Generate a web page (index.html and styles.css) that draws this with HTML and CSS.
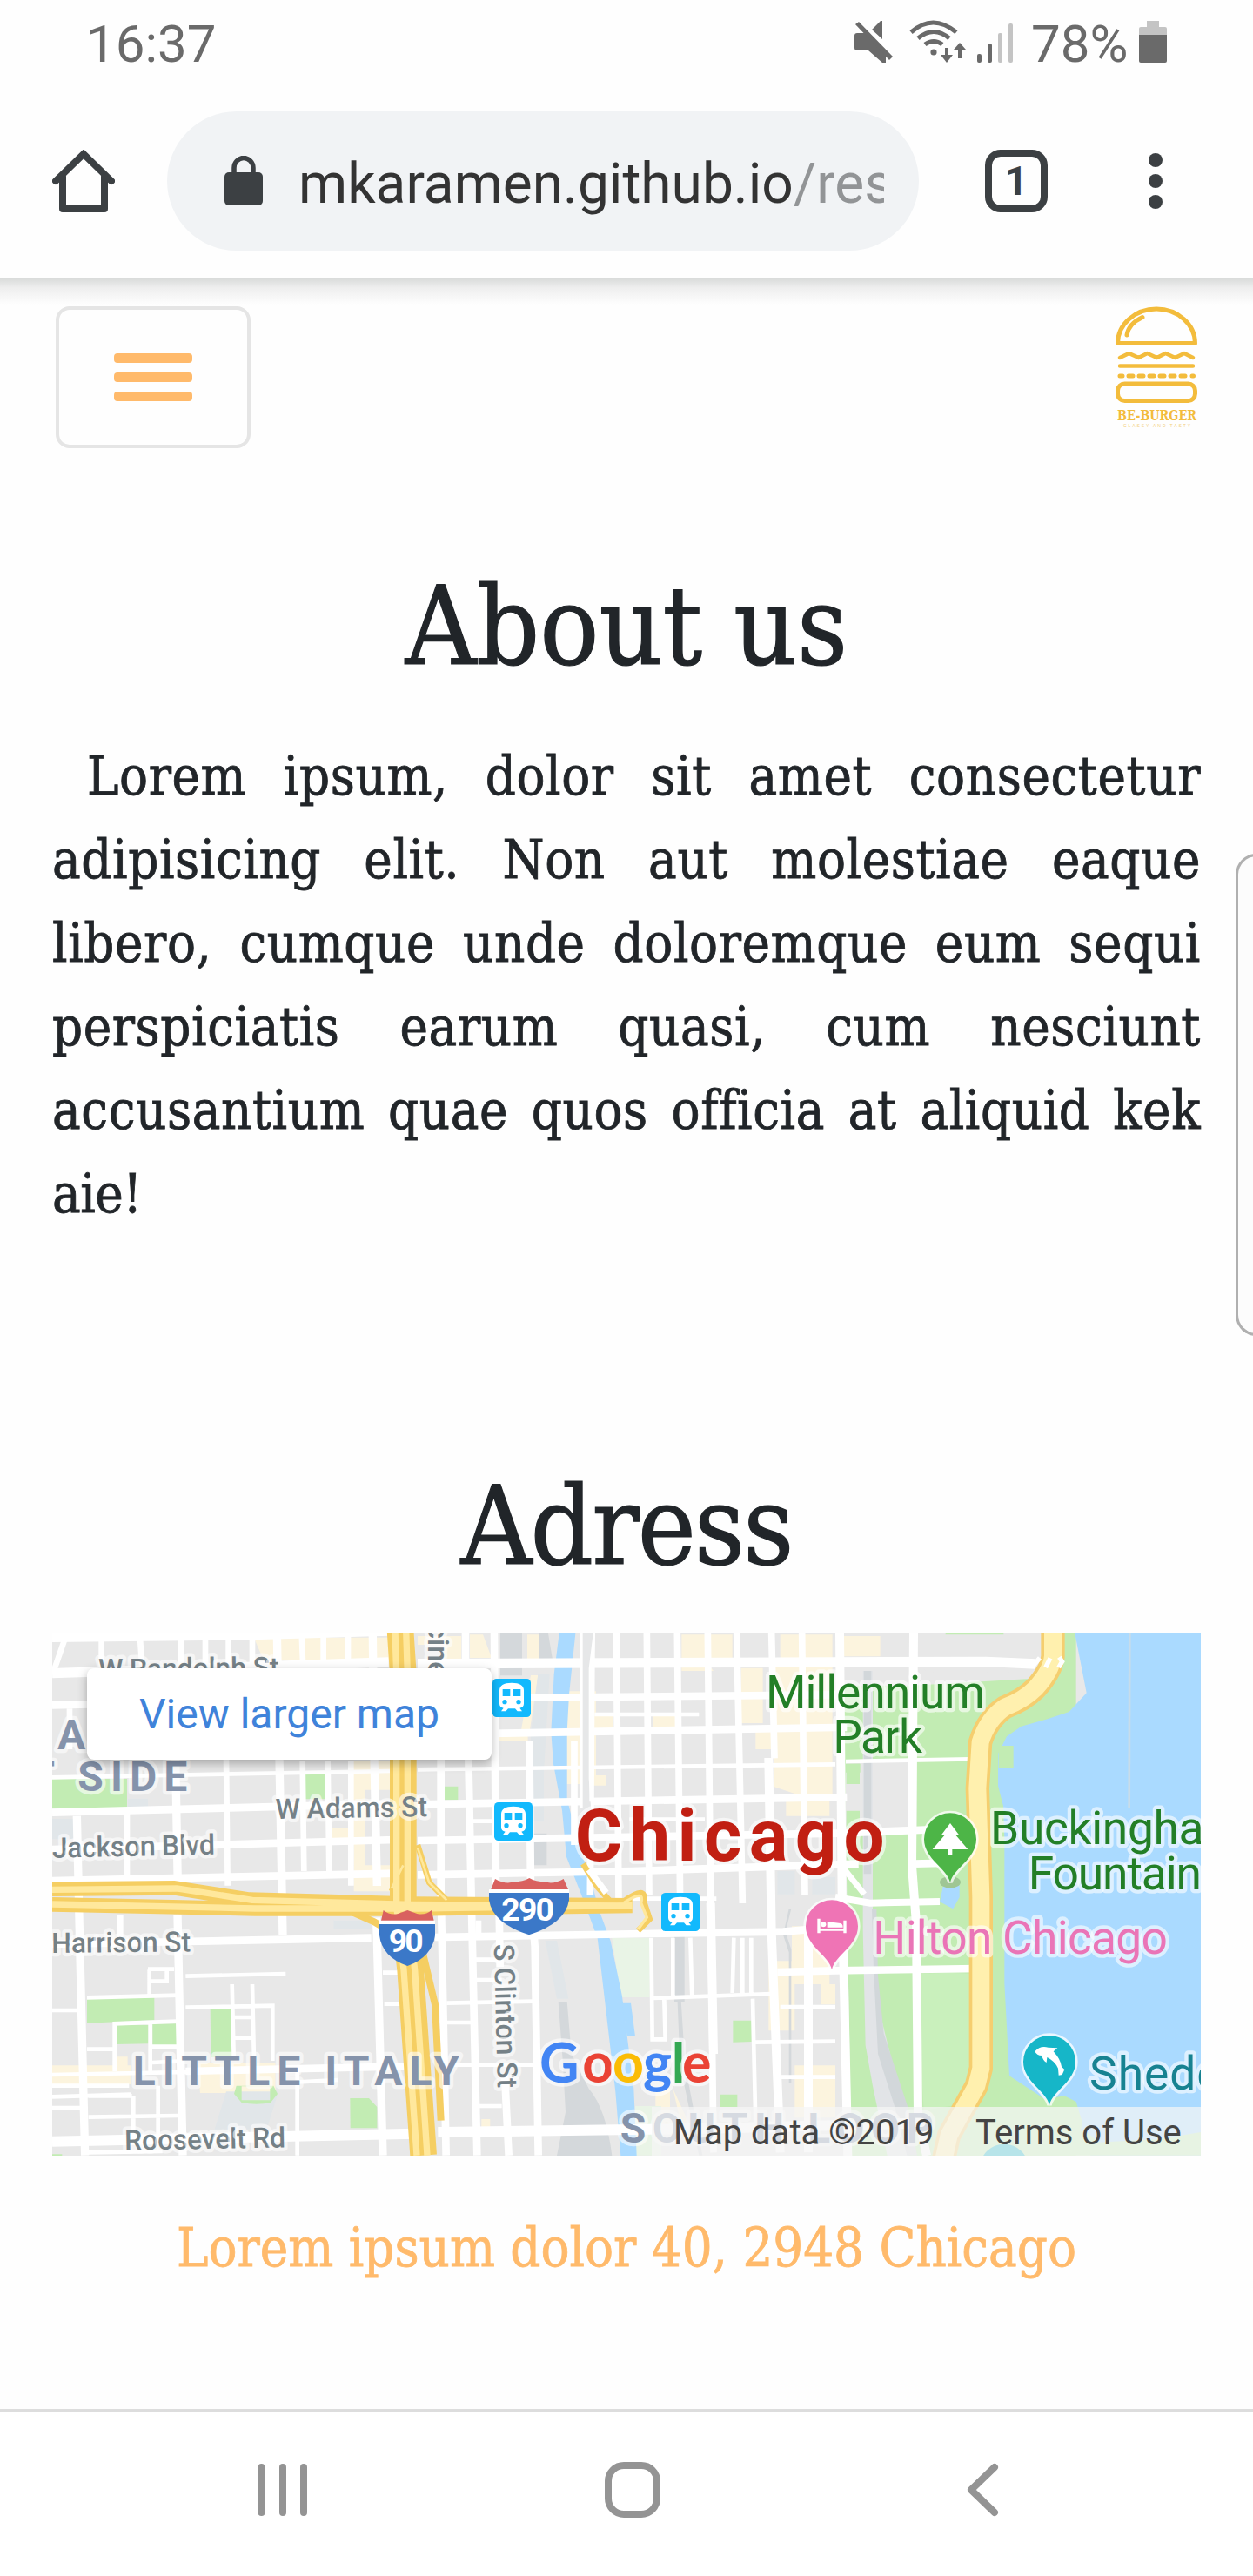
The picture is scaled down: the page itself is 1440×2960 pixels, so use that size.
FILE: index.html
```html
<!DOCTYPE html>
<html lang="en">
<head>
<meta charset="utf-8">
<title>BE-BURGER</title>
<link rel="stylesheet" href="styles.css">
</head>
<body>
<div class="status">
  <span class="clock">16:37</span>
  <div class="status-right">
    <svg class="status-icons" viewBox="975 20 200 56">
      <g fill="#6a6a6a">
        <path d="M985 38h12l21 22v12h-4l-16-14h-13q-3 0-3-3V41q0-3 3-3zM1002 34l10-10h2v21z"/>
        <path d="M983 28l4-3 39 40-4 4z"/>
        <g fill="none" stroke="#6a6a6a" stroke-width="5">
          <path d="M1047 37q25-22 52 0M1055 44q18-15 36 0M1063 51q10-7 20 0"/>
          <path d="M1088 55v14M1103 67V53" stroke-width="4"/>
        </g>
        <circle cx="1073" cy="60" r="3.6"/>
        <path d="M1081 63h14l-7 9zM1096 57h14l-7-8z"/>
        <rect x="1123" y="62" width="5" height="10" rx="2"/>
        <rect x="1135" y="50" width="5" height="22" rx="2"/>
      </g>
      <g fill="#c4c4c4">
        <rect x="1147" y="38" width="5" height="34" rx="2"/>
        <rect x="1159" y="27" width="5" height="45" rx="2"/>
      </g>
    </svg>
    <span class="percent">78%</span>
    <svg class="battery" viewBox="0 0 32 48"><path d="M9 0h14v7h7q2 0 2 2v8H0V9q0-2 2-2h7z" fill="#c4c4c4"/><path d="M0 16h32v30q0 2-2 2H2q-2 0-2-2z" fill="#6a6a6a"/></svg>
  </div>
</div>

<div class="toolbar">
  <svg class="home" viewBox="0 0 72 72" fill="none" stroke="#3c4043" stroke-width="8" stroke-linejoin="round" stroke-linecap="round"><path d="M4 36L36 5l32 31" stroke-linejoin="miter"/><path d="M12 31v37h48V31"/></svg>
  <div class="pill">
    <svg class="lock" viewBox="0 0 44 58"><rect y="19" width="44" height="38" rx="5" fill="#3c4043"/><path d="M11 22v-8a11 11.500 0 0 1 22 0v8" fill="none" stroke="#3c4043" stroke-width="5.500"/></svg>
    <div class="url">mkaramen.github.io<span>/res</span></div>
  </div>
  <div class="tabs">1</div>
  <div class="dots"><i></i><i></i><i></i></div>
</div>

<main>
  <header class="site-header">
    <button class="burger"><i></i><i></i><i></i></button>
    <svg class="logo" viewBox="1280 350 98 146">
      <g fill="none" stroke="#f3bc3c" stroke-width="5" stroke-linecap="round" stroke-linejoin="round">
        <path d="M1284.500 394.500a44.500 39.500 0 0 1 89 0z"/>
        <path d="M1295 385q2-13 18-20.500"/>
        <path d="M1287 411l10.500-5 11 5 10-5 11 5 10-5 11 5 10.500-5 10 5M1287 420.500h84" stroke-width="4.500"/>
        <path d="M1287 432h3M1297 432h5M1309 432h5M1321 432h5M1333 432h5M1345 432h5M1357 432h5M1370 432h1.500"/>
        <rect x="1284.500" y="441" width="89" height="19.500" rx="8"/>
      </g>
      <text class="brand" x="1284" y="483" textLength="91" lengthAdjust="spacingAndGlyphs">BE-BURGER</text>
      <text class="tagline" x="1291" y="491" textLength="77">CLASSY AND TASTY</text>
    </svg>
  </header>

  <h1>About us</h1>
  <p class="about">
    <span class="first">Lorem ipsum, dolor sit amet consectetur</span>
    <span>adipisicing elit. Non aut molestiae eaque</span>
    <span>libero, cumque unde doloremque eum sequi</span>
    <span>perspiciatis earum quasi, cum nesciunt</span>
    <span>accusantium quae quos officia at aliquid kek</span>
    <span class="last">aie!</span>
  </p>

  <h1 class="adress">Adress</h1>
  <div class="map">
    <svg class="map-canvas" viewBox="180 51 3960 1800" preserveAspectRatio="none">
      <defs>
        <g id="train">
          <rect width="132" height="132" rx="14" fill="#12b9fd"/>
          <path d="M24 40q0-26 42-26t42 26v46q0 12-14 15l8 11H86l-8-9H54l-8 9H30l8-11q-14-3-14-15z" fill="#fff"/>
          <path d="M35 36h26v24H35zM71 36h26v24H71z" fill="#12b9fd"/>
          <circle cx="42" cy="80" r="8" fill="#12b9fd"/><circle cx="90" cy="80" r="8" fill="#12b9fd"/>
        </g>
        <path id="pin" d="M0 150C-10 100-90 70-90 0a90 90 0 0 1 180 0C90 70 10 100 0 150z" stroke="#fff" stroke-opacity=".75" stroke-width="16" paint-order="stroke"/>
      </defs>
      <rect x="180" y="51" width="3960" height="1800" fill="#e8e8e8"/>

      <!-- commercial blocks -->
      <g fill="#fcf4de">
        <path d="M875 65h470v80H910zM1210 490h140v100h-90v260h90v90h-130V780h-80v-60h70z"/>
        <path d="M1440 60h150v80h-60v-50h-90zM1620 55h45l30 80h-75zM1818 55h42v85h-42zM1830 195h25l-30 200h-30zM1690 405h130v15h-130z"/>
        <path d="M1955 250h100v320h-100zM2050 540h40v35h-50zM2045 330h70v50h-70zM2250 330h80v45h-80zM2350 55h80v85l30 40h-110zM2445 55h80v80h-80z"/>
        <path d="M2690 55h180v80h-180zM2555 170h75v190h-75zM2605 390h80v60h-80zM2670 160h200v450h-110l-90-30zM2710 630h150v50h-150zM2905 60h130v70h-130z"/>
        <path d="M180 1540h270v65H180zM400 1510h40v90h-40zM680 1530h270v105H690zM2650 1180h90v240h-90zM2730 1060h130v200h-130zM2830 1260h50v70h-50zM2740 1540h140v180h-140zM2260 1620h50v150h-50zM2320 1620l60 130h-30zM1660 1725h30v30h-30z"/>
      </g>
      <g fill="#d4d8db">
        <path d="M1725 51h75v145h-75zM1860 51h30l15 90h-45zM1840 740h45v110h-45zM2325 1080h35v240h-35zM2335 1300h12l15 240 60 310h-12l-65-310z"/>
        <path d="M1925 1320h30l15 180 60 120q60 70 80 231h-190l30-150-10-180z"/>
        <path d="M2720 1000h8l-20 80 20 60v460h-8v-450l-20-60z"/>
      </g>
      <path d="M1855 190h40l-20 340v170h-45V400zM440 620h70v30h-70zM180 690h75v70h-75zM740 1760l40-130h180l-40 130zM1150 1040h130v30h-130zM1880 1110h40l40 200h-40zM2680 870h60v80h-60zM2800 890h80v60h-80z" fill="#e1e6e9"/>

      <!-- left and central parks -->
      <g fill="#c2ecb3">
        <path d="M180 552h258v98l-258 5zM1050 537h70v85h-70zM1531 578h48v47h-48zM300 1308l232-2v78l-232 10zM400 1400h112v65l-112 2zM526 1396h86v74h-86zM725 1347l76-5 8 80-6 90h-76zM1207 1653h65l28 30v73h-92zM2527 1385h64v73l-64 2zM2484 1640h58v43h-58zM180 1846h34v5h-34z"/>
        <path d="M815 1610h128l14 28-24 30q-48 10-100 0l-26-30zM833 1612v48h98v-48z" fill-rule="evenodd"/>
      </g>
      <path d="M2110 1100h130v205h-100zM2190 1680h90v170h-90z" fill="#e9f4e6"/>

      <!-- lake shore -->
      <path d="M2908 230h232l100-5 350-20 20-154h100v1800H2935z" fill="#c2ecb3"/>
      <path d="M3160 51h420v80l-30 50-300 10-85-20z" fill="#e8e8e8"/>
      <path d="M2916 495h244v230h-244zM2916 530h50v-30h-50z" fill="#e8e8e8"/>
      <path d="M2918 500h46v70h-46zM2918 662h46v150h-46z" fill="#c2ecb3"/>
      <path d="M3260 51h200v4h-200z" fill="#c2ecb3"/>
      <path d="M3150 1225l120-5 95 5v300l-60 150-120 20-20-300z" fill="#c9f0bc"/>
      <path d="M2975 180h34v940l25 240 40 160 60 331h-75l-50-240-25-140-9-400z" fill="#e2e4e7"/>
      <path d="M2978 180h26v700h-26zM3006 1000h16l5 230 20 200 85 260 30 160h-35l-40-160-60-190-15-290z" fill="#d2d7da"/>
      <path d="M3706 51h434v1800h-380l-50-170-100-20-130-85-17-320v-500l-4-110-18-70v-110l30-60 50-35 90-25 75-25 60-65z" fill="#aadaff"/>
      <path d="M3443 438h51v76h-51z" fill="#c2ecb3"/>
      <path d="M3465 1610l65 60 50-10 90-15 40 20 30 100 50 40 200-10 150-25v80h-740z" fill="#c2ecb3"/>
      <path d="M3890 1795l250-30v-60h-400l-15 60z" fill="#aadaff"/>
      <path d="M3895 51l-2 600" stroke="#c7dcea" stroke-width="8" fill="none"/>
      <path d="M3280 895l28 25v40l-22 40-46-24 12-56z" fill="#aadaff"/>

      <!-- river -->
      <path d="M1928 51h56l-22 210-7 130v230l45 180 30 70 34 130 41 110 40 190 40 320 10 230h-55l-18-220-62-530-52-140-55-140-15-160-30-160-8-110 10-200z" fill="#aadaff"/>
      <path d="M2145 1325h30l15 115h-28z" fill="#aadaff"/>

      <!-- streets -->
      <g fill="none" stroke="#fff">
        <g stroke-width="26">
          <path d="M180 64l690-8 470-14M180 188l1160-38M1440 155l1440-5 520-2 170 8" stroke-width="34"/>
          <path d="M180 51h50l-45 130" stroke-width="20"/>
          <path d="M180 298l260-6M1440 276l1440-14M1440 400l1440-25 40 0"/>
          <path d="M180 668l1170-30M1440 640l1480-25M180 795l1185-33M1440 765l1440-25 330-13M180 903l1190-25M1440 883l740-13 780-25"/>
          <path d="M180 1122l1100-22M1500 1098l720-12 480-7 180-15 0-80M2680 1218l200-5 490-7"/>
          <path d="M180 1802l1250-27M1510 1770l900-12 800-20" stroke-width="36"/>
          <path d="M640 1560l800-18M3150 845l130-3"/>
          <path d="M2880 960l120 20 240-5" stroke-width="24"/>
        </g>
        <g stroke-width="14">
          <path d="M180 547l1170-22M1440 520l1440-18M2916 492l430-8M2050 330h360M1630 698h80M2170 692h260M2170 965h300"/>
          <path d="M180 1350h90M300 1306l315-8M510 1208h90M515 1210v90M575 1210v40h-60M640 1232l345-8M640 1340l300-6v190M800 1260l6 250M870 1260l6 270M806 1374h65M806 1445h65M395 1480v-84l215-8M300 1484h90M395 1480v80M518 1390v170M180 1648l270-8M305 1645h150M305 1718l310-5M180 1686h100M460 1645v150M545 1610v200M525 1530l100-5M525 1475h90M180 1572l1020-20M180 1610h265M300 1840l260-4M1025 1560v290M975 1600l190-10"/>
          <path d="M1540 1325l300-6M1540 1392h90M1640 1175h90M1640 1245h90M1560 1538h280M1640 1680h90M1320 1220h60M1325 1328h60M2250 1308l410-15M2290 1310l4 140h-45l-4-350M2320 1100v200M2380 1100l6 210M2530 1100l-5 190M2560 1100v190M2590 1100v190M2595 1310l10 430M2600 1460l280-3M2690 1338h190M2690 1580h190"/>
        </g>
        <g stroke-width="20">
          <path d="M350 51v120M482 51l8 120M625 51v110M708 51v110M788 51v110M870 51v110M438 670v220M415 1020v80M780 480l5 440M1040 51l5 120M1115 51v120M1200 51v120M1043 490l5 380M1130 490l5 380M1210 490v430M1650 1040v60M240 310v140"/>
          <path d="M265 680l10 440 18 730M605 480l8 440M612 1020l18 830M955 51l8 430 12 610" stroke-width="28"/>
          <path d="M1285 51l5 430 10 440M1298 1030l22 820" stroke-width="28"/>
          <path d="M1605 51v100M1704 51l6 890M1520 480v450l18 920M1615 480l10 480 20 890M1825 420l5 520 14 190 12 720M1720 940l4 260M1740 1570l14 280" stroke-width="26"/>
          <path d="M1980 420v360M2040 51l-5 900M2125 51l8 920M2230 51l8 900M2335 51l10 930M2440 51l10 930M2540 51l20 930M2660 51l10 430M2765 51l10 900M2450 1000l10 840" stroke-width="23"/>
          <path d="M2650 480l10 600 30 760M2450 980l10 520M2787 1060v780M2895 51l8 900 20 900M3150 51l-6 800 15 200 6 660 30 140" stroke-width="30"/>
          <path d="M2900 850l80 100" />
        </g>
      </g>
      <path d="M2005 51h40l-15 120v380l8 110-10 60h-25l2-120V250z" fill="#e6e7e8"/>
      <path d="M2005 51v600M2048 51l-12 300v280" stroke="#fff" stroke-width="8" fill="none"/>

      <!-- highways -->
      <g fill="none" stroke="#f5ce62">
        <path d="M1380 40l10 150v800l25 220 45 640" stroke-width="92"/>
        <path d="M1440 780l40 130 60 60M1350 940l40-90 20-120" stroke-width="20"/>
        <path d="M180 932l420-4 260 40 560 15 760 5M180 985l700 15 560 0 740-10" stroke-width="50"/>
        <path d="M2010 845l50 80 40 45M2150 975q80-60 70 0l20 60-40 40" stroke-width="20"/>
        <path d="M1200 1005l90 40 100 60M1450 1120l50 210 20 400" stroke-width="24"/>
      </g>
      <g fill="none" stroke="#ffe89c">
        <path d="M1362 40l5 150v800l25 220 45 640M1400 40l5 150v800l25 220 43 640" stroke-width="22"/>
        <path d="M1440 790l40 120 60 60M1350 930l40-80" stroke-width="8"/>
        <path d="M180 934l430-4 260 40 550 15 750 5M180 984l700 15 560 0 740-10" stroke-width="22"/>
        <path d="M2150 980q75-50 60 0l20 50-30 40" stroke-width="10"/>
      </g>
      <path d="M2030 865l60 80" stroke="#fff" stroke-width="22"/>
      <path d="M3630 40v90q-5 50-60 110-40 40-105 65-60 40-85 120l-10 160 12 375v590l-15 60-95 170-40 180" fill="none" stroke="#f5ce6f" stroke-width="82" stroke-linejoin="round"/>
      <path d="M3630 40v90q-5 50-60 110-40 40-105 65-60 40-85 120l-10 160 12 375v590l-15 60-95 170-40 180" fill="none" stroke="#fff0ae" stroke-width="60" stroke-linejoin="round"/>
      <path d="M3560 165l25-30M3605 168l16-32M3650 168l12-20-10-15" fill="none" stroke="#fff" stroke-width="16"/>

      <!-- street and district labels -->
      <g class="street">
        <text x="340" y="208" textLength="622" transform="rotate(-.7 340 208)">W Randolph St</text>
        <text x="950" y="690" textLength="524" transform="rotate(-1 950 690)">W Adams St</text>
        <text x="180" y="824" textLength="562" transform="rotate(-1.200 180 824)">Jackson Blvd</text>
        <text x="178" y="1152" textLength="480" transform="rotate(-.6 178 1152)">Harrison St</text>
        <text x="430" y="1832" textLength="555" transform="rotate(-1 430 1832)">Roosevelt Rd</text>
        <text x="1703" y="1122" textLength="496" transform="rotate(88.500 1703 1122)">S Clinton St</text>
        <text x="1475" y="-95" transform="rotate(90 1475 -95)">Racine</text>
      </g>
      <g class="district">
        <text x="198" y="450">A</text>
        <text x="100" y="595">T</text>
        <text x="268" y="595" textLength="378">SIDE</text>
        <text x="458" y="1608" textLength="1126">LITTLE ITALY</text>
        <text x="2138" y="1807" textLength="1080">SOUTH LOOP</text>
      </g>

      <use href="#train" x="1698" y="207"/>
      <use href="#train" x="1704" y="633"/>
      <use href="#train" x="2280" y="945"/>

      <!-- interstate shields -->
      <path d="M1692 935l15-38q35 20 65 10 30 0 53-13 23 13 53 13 30 10 65-10l17 38z" fill="#d9615f"/>
      <path d="M1686 933h276v14h-276z" fill="#fff"/>
      <path d="M1686 945h276v25q-12 80-138 120-126-40-138-120z" fill="#3b78c8"/>
      <path d="M1314 1041l8-36q22 18 50 12l33-12 33 12q28 6 50-12l8 36z" fill="#d9615f"/>
      <path d="M1308 1040h192v14h-192z" fill="#fff"/>
      <path d="M1308 1053h192v38q-10 75-95 106-88-31-97-106z" fill="#3b78c8"/>
      <text class="shield" x="1729" y="1042" textLength="182">290</text>
      <text class="shield" x="1340" y="1150" textLength="120">90</text>

      <!-- places -->
      <ellipse cx="3276" cy="908" rx="36" ry="20" fill="#9fc694"/>
      <use href="#pin" x="3276" y="760" fill="#4db547"/>
      <path d="M3276 705l30 40h-12l43 50h-54v18h-14v-18h-54l43-50h-12z" fill="#fff"/>
      <use href="#pin" x="2868" y="1060" fill="#ef74b5"/>
      <path d="M2818 1034h10v34h80v-28h10v44h-10v-8h-80v8h-10zM2852 1044l46 6q8 2 8 14h-54z" fill="#fff"/><circle cx="2839" cy="1054" r="9" fill="#fff"/>
      <use href="#pin" x="3618" y="1527" fill="#16b6c8"/>
      <path d="M3568 1492q18-22 46-14l32 2-14 12q24 26 28 52l10 10-8 18-12 2-2-24q-12-26-38-38l-2 18q-12-6-16-24-18 0-24-14z" fill="#fff"/>
      <circle cx="3462" cy="1895" r="84" fill="#16b6c8"/>
      <g class="place">
        <text x="2640" y="308" textLength="756">Millennium</text>
        <text x="2872" y="463" textLength="308">Park</text>
        <text x="3414" y="776" textLength="876">Buckingham</text>
        <text x="3545" y="933" textLength="598">Fountain</text>
        <text class="hotel" x="3010" y="1155" textLength="1016">Hilton Chicago</text>
        <text class="aquarium" x="3756" y="1622" textLength="460">Shedd</text>
      </g>
      <text class="city" x="1982" y="835" textLength="1068">Chicago</text>
      <text class="google" y="1600"><tspan x="1860" fill="#4285f4">G</tspan><tspan x="2008" fill="#ea4335">o</tspan><tspan x="2112" fill="#fbbc05">o</tspan><tspan x="2217" fill="#4285f4">g</tspan><tspan x="2315" fill="#34a853">l</tspan><tspan x="2352" fill="#ea4335">e</tspan></text>
    </svg>
    <a class="larger">View larger map</a>
    <div class="credits"><span class="data">Map data ©2019</span><span class="terms">Terms of Use</span></div>
  </div>
  <a class="location">Lorem ipsum dolor 40, 2948 Chicago</a>
</main>

<div class="edge-panel"></div>

<nav class="android">
  <svg viewBox="0 0 1440 188" fill="none" stroke="#949494" stroke-width="8" stroke-linecap="round" stroke-linejoin="round"><path d="M300.500 63v52M325 63v52M349 63v52"/><rect x="699" y="61" width="56" height="56" rx="18"/><path d="M1143 63l-27 26 27 26"/></svg>
</nav>
</body>
</html>
```
FILE: styles.css
```css
* { box-sizing: border-box; }
body {
  margin: 0;
  width: 1440px;
  height: 2960px;
  position: relative;
  display: flex;
  flex-direction: column;
  background: #fefefe;
  color: #212529;
  font-family: "DejaVu Serif Condensed", "DejaVu Serif", serif;
  font-stretch: condensed;
  overflow: hidden;
}
svg { display: block; }

.status {
  height: 100px;
  flex: none;
  display: flex;
  justify-content: space-between;
  padding: 0 99px;
  font: 400 60px/102px Roboto, sans-serif;
  color: #6a6a6a;
}
.status-right { display: flex; gap: 10px; }
.status-icons { width: 200px; height: 56px; margin-top: 20px; }
.percent { width: 114px; white-space: nowrap; }
.battery { width: 32px; height: 48px; margin-top: 24px; }

.toolbar {
  height: 220px;
  flex: none;
  display: flex;
  align-items: center;
  padding: 0 104px 4px 60px;
  position: relative;
}
.toolbar::after {
  content: "";
  position: absolute;
  left: 0;
  right: 0;
  top: 220px;
  height: 30px;
  background: linear-gradient(#d9dbda, #eee 35%, #fefefe);
}
.home { width: 72px; height: 72px; }
.pill {
  width: 864px;
  height: 160px;
  margin-left: 60px;
  padding: 0 40px 0 66px;
  border-radius: 80px;
  background: #f1f3f5;
  display: flex;
  align-items: center;
}
.lock { width: 44px; height: 58px; flex: none; }
.url {
  margin: 7px 0 0 41px;
  width: 673px;
  overflow: hidden;
  white-space: nowrap;
  font: 400 64px/80px Roboto, sans-serif;
  color: #333;
}
.url span { color: #929496; }
.tabs {
  width: 72px;
  height: 72px;
  margin-left: 76px;
  border: 8px solid #3c4043;
  border-radius: 18px;
  font: 700 46px/56px Roboto, sans-serif;
  text-align: center;
  color: #3c4043;
}
.dots { display: flex; flex-direction: column; gap: 8px; margin-left: 116px; }
.dots i { width: 16px; height: 16px; border-radius: 50%; background: #3c4043; }

main { height: 2448px; flex: none; padding: 32px 60px 0; }
.site-header { display: flex; justify-content: space-between; padding: 0 2px 0 4px; height: 163px; }
.burger {
  width: 224px;
  height: 163px;
  padding: 0;
  border: 4px solid #e5e5e5;
  border-radius: 16px;
  background: none;
  display: flex;
  flex-direction: column;
  align-items: center;
  justify-content: center;
  gap: 11px;
}
.burger i { width: 90px; height: 11px; border-radius: 4px; background: #ffba6b; }
.logo { width: 98px; height: 146px; margin-top: -2px; }
.brand { font: 700 16px "DejaVu Serif", serif; fill: #f3bc3c; }
.tagline { font: 400 5px "Liberation Sans", sans-serif; fill: #f3cf7c; }

h1 {
  margin: 130px 0 0;
  font-size: 126px;
  font-weight: 400;
  line-height: 150px;
  text-align: center;
  -webkit-text-stroke: 1.2px currentColor;
}
.about { margin: 49px 0 0; font-size: 61px; line-height: 96px; letter-spacing: .6px; -webkit-text-stroke: .8px currentColor; }
.about span { display: block; white-space: nowrap; text-align: justify; text-align-last: justify; }
.about .first { padding-left: 40px; }
.about .last { text-align-last: left; letter-spacing: -.5px; }
.adress { margin-top: 259px; letter-spacing: -1.8px; }

.map { position: relative; height: 600px; margin-top: 48px; overflow: hidden; font-family: Roboto, sans-serif; font-stretch: normal; }
.map-canvas { width: 1320px; height: 600px; }
.map-canvas text { font-family: Roboto, sans-serif; paint-order: stroke; stroke: #fff; stroke-opacity: .6; stroke-width: 26px; stroke-linejoin: round; }
.map-canvas .street text { font-size: 97px; font-weight: 500; fill: #758187; }
.map-canvas .district text { font-size: 144px; font-weight: 700; fill: #8593ab; }
.map-canvas .place text { font-size: 160px; font-weight: 400; fill: #237f27; }
.map-canvas .place .hotel { fill: #ea75b7; }
.map-canvas .place .aquarium { fill: #178291; }
.map-canvas .city { font-size: 250px; font-weight: 700; fill: #c11f12; }
.map-canvas .shield { font-size: 112px; font-weight: 700; fill: #fff; stroke: none; }
.map-canvas .google { font-family: Lato, sans-serif; font-size: 188px; font-weight: 700; }
.larger {
  position: absolute;
  left: 40px;
  top: 40px;
  width: 465px;
  height: 105px;
  border-radius: 8px;
  background: #fff;
  box-shadow: 0 4px 12px rgba(0, 0, 0, .3);
  font-size: 48px;
  line-height: 106px;
  text-align: center;
  color: #3f83da;
}
.credits { position: absolute; right: 0; bottom: 0; display: flex; height: 56px; font-size: 40px; line-height: 60px; color: #444; white-space: nowrap; }
.credits span { background: rgba(245, 245, 245, .72); }
.data { width: 348px; padding-left: 25px; }
.terms { width: 283px; padding-left: 24px; }
.location { display: block; margin-top: 58px; font-size: 61px; line-height: 96px; text-align: center; color: #ffba6b; white-space: nowrap; -webkit-text-stroke: .8px currentColor; }

.edge-panel {
  position: absolute;
  right: -4px;
  top: 981px;
  width: 24px;
  height: 554px;
  border: 3px solid #b0b0b0;
  border-radius: 24px 0 0 24px;
  background: #fcfcfc;
}
.android { height: 192px; flex: none; border-top: 4px solid #ddd; background: #fff; }
.android svg { width: 1440px; height: 188px; }
```
